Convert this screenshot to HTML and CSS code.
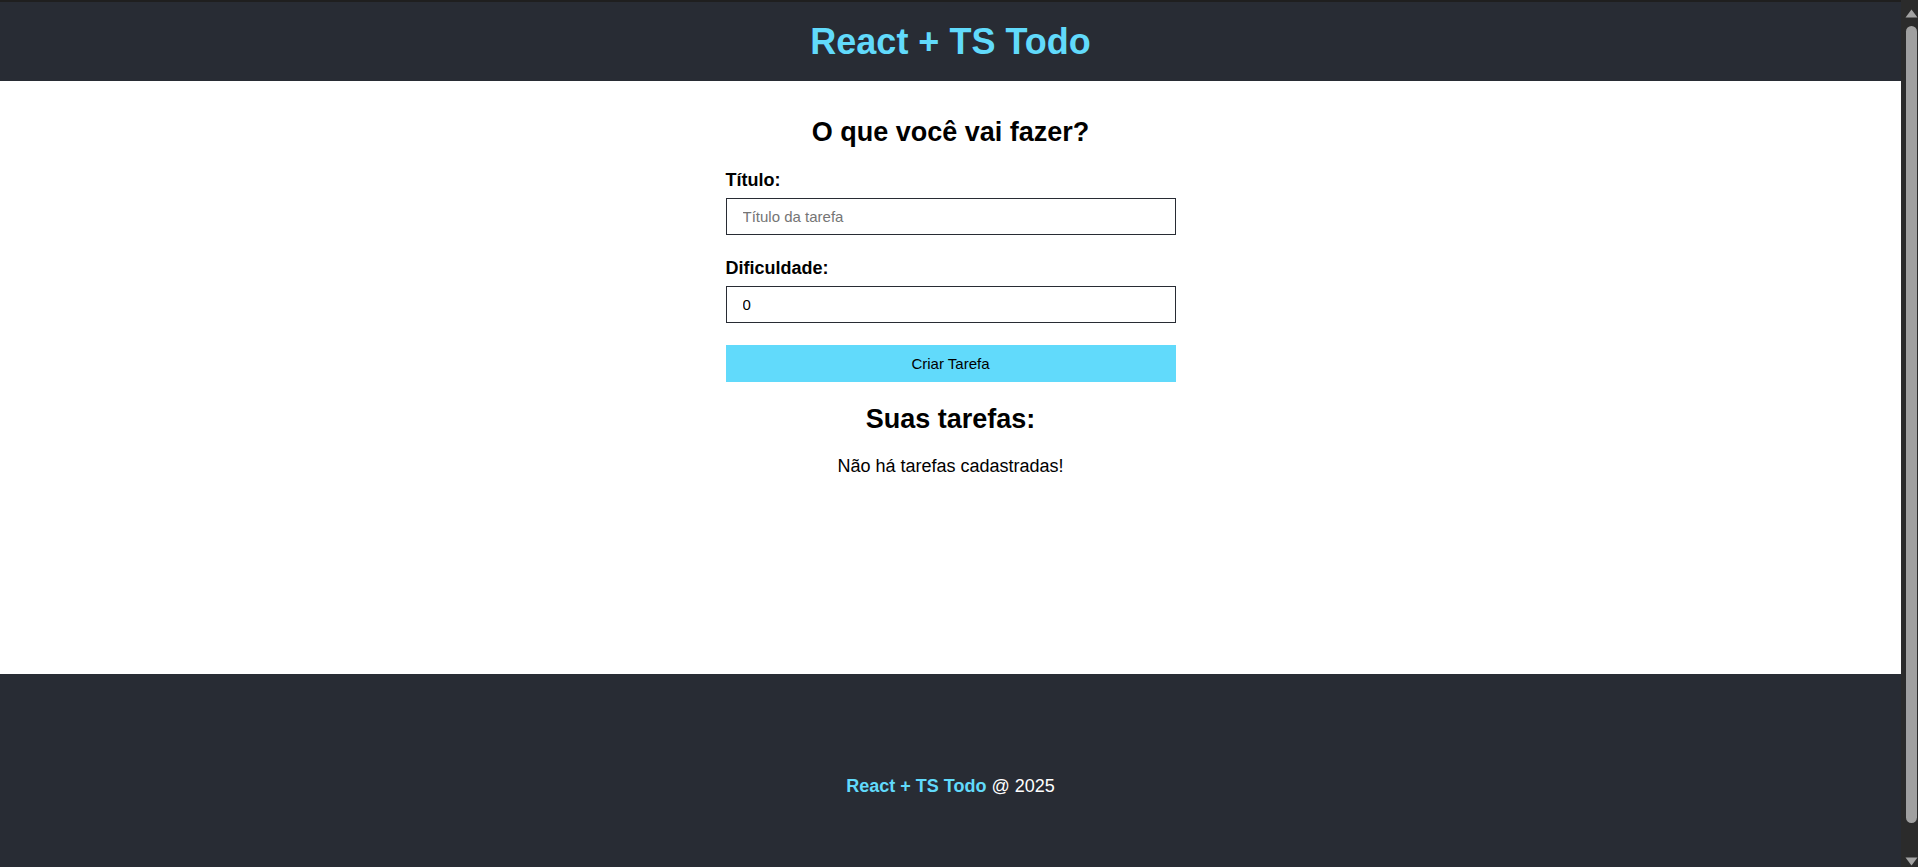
FILE: index.html
```html
<!DOCTYPE html>
<html lang="pt-BR">
<head>
<meta charset="utf-8">
<title>React + TS Todo</title>
<link rel="stylesheet" href="styles.css">
</head>
<body>
<div class="page">
  <header class="header">
    <h1 class="header-title">React + TS Todo</h1>
  </header>
  <main class="main">
    <div class="container">
      <h2 class="section-title">O que você vai fazer?</h2>
      <form class="form">
        <div class="field">
          <label class="label" for="title">Título:</label>
          <input class="input" id="title" type="text" placeholder="Título da tarefa">
        </div>
        <div class="field">
          <label class="label" for="difficulty">Dificuldade:</label>
          <input class="input" id="difficulty" type="text" value="0">
        </div>
        <button class="submit" type="button">Criar Tarefa</button>
      </form>
      <h2 class="section-title list-title">Suas tarefas:</h2>
      <p class="empty">Não há tarefas cadastradas!</p>
    </div>
  </main>
  <footer class="footer">
    <p class="footer-text"><span class="footer-brand">React + TS Todo</span> @ 2025</p>
  </footer>
</div>
<div class="scrollbar" aria-hidden="true">
  <svg class="scroll-arrow up" width="13" height="9" viewBox="0 0 13 9"><path d="M6.5 0.5 L12.5 8.5 L0.5 8.5 Z" fill="#a3a3a3"/></svg>
  <div class="scroll-thumb"></div>
  <div class="scroll-space"></div>
  <svg class="scroll-arrow down" width="13" height="9" viewBox="0 0 13 9"><path d="M0.5 0.5 L12.5 0.5 L6.5 8.5 Z" fill="#a3a3a3"/></svg>
</div>
</body>
</html>
```

FILE: styles.css
```css
html {
  background: #282c34;
}

* {
  box-sizing: border-box;
}

body {
  margin: 0;
  font-family: "Liberation Sans", Arial, sans-serif;
  color: #000;
  background: #282c34;
  border-top: 2px solid #1f1f1f;
}

.page {
  margin-right: 17px;
}

.header {
  height: 79px;
  background: #282c34;
  display: flex;
  align-items: center;
  justify-content: center;
}

.header-title {
  margin: 0;
  font-size: 36px;
  line-height: 40px;
  font-weight: 700;
  color: #61dafb;
}

.main {
  background: #fff;
  min-height: 593px;
}

.container {
  width: 450px;
  margin: 0 auto;
  padding-top: 35.5px;
  display: flex;
  flex-direction: column;
}

.section-title {
  margin: 0;
  font-size: 27px;
  line-height: 30px;
  font-weight: 700;
  text-align: center;
  color: #000;
}

.form {
  margin-top: 23.5px;
  display: flex;
  flex-direction: column;
  gap: 22.5px;
}

.field {
  display: flex;
  flex-direction: column;
  gap: 8px;
}

.label {
  font-size: 18px;
  line-height: 20px;
  font-weight: 700;
  color: #000;
}

.input {
  height: 37px;
  width: 100%;
  margin: 0;
  padding: 0 16px;
  border: 1px solid #282c34;
  border-radius: 0;
  background: #fff;
  color: #000;
  font-family: "Liberation Sans", Arial, sans-serif;
  font-size: 15px;
  outline: none;
}

.input::placeholder {
  color: #757575;
}

.submit {
  height: 37px;
  width: 100%;
  margin: 0;
  border: none;
  border-radius: 0;
  background: #61dafb;
  color: #000;
  font-family: "Liberation Sans", Arial, sans-serif;
  font-size: 15px;
  cursor: pointer;
}

.list-title {
  margin-top: 21.5px;
}

.empty {
  margin: 22.5px 0 0;
  font-size: 18px;
  line-height: 21px;
  text-align: center;
  color: #000;
}

.footer {
  height: 223px;
  background: #282c34;
  display: flex;
  align-items: center;
  justify-content: center;
}

.footer-text {
  margin: 0;
  font-size: 18px;
  line-height: 20px;
  color: #fff;
}

.footer-brand {
  font-weight: 700;
  color: #61dafb;
}

.scrollbar {
  position: fixed;
  top: 0;
  right: 0;
  width: 17px;
  height: 100vh;
  background: #2b2b2b;
  display: flex;
  flex-direction: column;
  align-items: flex-start;
  padding-left: 4px;
}

.scroll-arrow {
  display: block;
  flex: none;
}

.scroll-arrow.up {
  margin-top: 9px;
}

.scroll-arrow.down {
  margin-bottom: 1px;
}

.scroll-thumb {
  flex: none;
  margin-top: 8px;
  margin-left: 1px;
  width: 11px;
  height: 797px;
  border-radius: 6px;
  background: #a0a0a0;
}

.scroll-space {
  flex: 1;
}
```
